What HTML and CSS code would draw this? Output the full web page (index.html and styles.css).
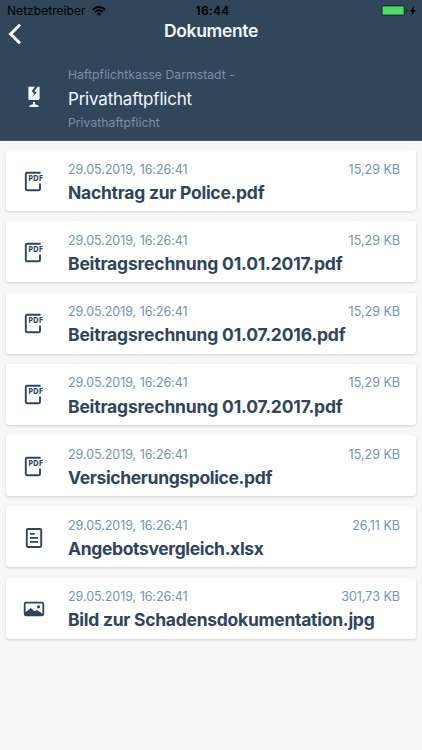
FILE: index.html
```html
<!DOCTYPE html>
<html lang="de">
<head>
<meta charset="utf-8">
<title>Dokumente</title>
<link rel="stylesheet" href="styles.css">
</head>
<body>
<header class="header">
  <div class="status">
    <div class="carrier"><span>Netzbetreiber</span>
      <svg class="wifi" viewBox="0 0 14 10"><g fill="none" stroke="#000" stroke-width="1.9"><path d="M.7 3.7Q7-1.8 13.3 3.7"/><path d="M3 6.1Q7 2.6 11 6.1"/></g><path d="M4.8 7.6Q7 5.8 9.2 7.6L7 9.9Z"/></svg>
    </div>
    <div class="time">16:44</div>
    <div class="power"><svg viewBox="0 0 38 12"><rect x="1.6" y=".6" width="23" height="10" rx="2" fill="none" stroke="#17342f"/><rect x="2.6" y="1.6" width="21" height="8" rx="1" fill="#4cdb63"/><path d="M25.9 4v3.4q1.3-.4 1.3-1.7T25.9 4" fill="#17242f"/><path d="M34.4.8L30 6.4h2.5l-1.1 4L35.8 5h-2.6z"/></svg></div>
  </div>
  <div class="nav">
    <svg class="back" viewBox="0 0 14 22"><path d="M12 1.7L2.6 11 12 20.3" fill="none" stroke="#fff" stroke-width="3"/></svg>
    <h1>Dokumente</h1>
  </div>
  <div class="contract">
    <svg class="glass" viewBox="0 0 24 24"><path fill="#f0f7ff" d="M6.4 1.7H12.8L9.7 6.2L12 8.5L10.4 12L14.6 7.8L12.4 5.9L15.8 1.7H17.6V13.4Q17.6 15 16 15H8Q6.4 15 6.4 13.4ZM11 17h2v2.2l3.5 1.3V22H7.5v-1.5l3.5-1.3z"/></svg>
    <div class="contract-text">
      <div class="insurer">Haftpflichtkasse Darmstadt -</div>
      <div class="product">Privathaftpflicht</div>
      <div class="kind">Privathaftpflicht</div>
    </div>
  </div>
</header>
<main class="list">
  <article class="card"><svg class="icon" viewBox="0 0 24 24"><path class="page" d="M18.6 2.7H5.2Q3.8 2.7 3.8 4.1V18.9Q3.8 20.3 5.2 20.3H16.6Q18 20.3 18 18.9V13.5"/><text x="6.2" y="11.2" class="pdf-label" textLength="14.8" lengthAdjust="spacingAndGlyphs">PDF</text></svg><div class="body"><div class="meta"><span class="date">29.05.2019, 16:26:41</span><span class="size">15,29 KB</span></div><h2>Nachtrag zur Police.pdf</h2></div></article>
  <article class="card"><svg class="icon" viewBox="0 0 24 24"><path class="page" d="M18.6 2.7H5.2Q3.8 2.7 3.8 4.1V18.9Q3.8 20.3 5.2 20.3H16.6Q18 20.3 18 18.9V13.5"/><text x="6.2" y="11.2" class="pdf-label" textLength="14.8" lengthAdjust="spacingAndGlyphs">PDF</text></svg><div class="body"><div class="meta"><span class="date">29.05.2019, 16:26:41</span><span class="size">15,29 KB</span></div><h2 class="dated">Beitragsrechnung 01.01.2017.pdf</h2></div></article>
  <article class="card"><svg class="icon" viewBox="0 0 24 24"><path class="page" d="M18.6 2.7H5.2Q3.8 2.7 3.8 4.1V18.9Q3.8 20.3 5.2 20.3H16.6Q18 20.3 18 18.9V13.5"/><text x="6.2" y="11.2" class="pdf-label" textLength="14.8" lengthAdjust="spacingAndGlyphs">PDF</text></svg><div class="body"><div class="meta"><span class="date">29.05.2019, 16:26:41</span><span class="size">15,29 KB</span></div><h2 class="dated">Beitragsrechnung 01.07.2016.pdf</h2></div></article>
  <article class="card"><svg class="icon" viewBox="0 0 24 24"><path class="page" d="M18.6 2.7H5.2Q3.8 2.7 3.8 4.1V18.9Q3.8 20.3 5.2 20.3H16.6Q18 20.3 18 18.9V13.5"/><text x="6.2" y="11.2" class="pdf-label" textLength="14.8" lengthAdjust="spacingAndGlyphs">PDF</text></svg><div class="body"><div class="meta"><span class="date">29.05.2019, 16:26:41</span><span class="size">15,29 KB</span></div><h2 class="dated">Beitragsrechnung 01.07.2017.pdf</h2></div></article>
  <article class="card"><svg class="icon" viewBox="0 0 24 24"><path class="page" d="M18.6 2.7H5.2Q3.8 2.7 3.8 4.1V18.9Q3.8 20.3 5.2 20.3H16.6Q18 20.3 18 18.9V13.5"/><text x="6.2" y="11.2" class="pdf-label" textLength="14.8" lengthAdjust="spacingAndGlyphs">PDF</text></svg><div class="body"><div class="meta"><span class="date">29.05.2019, 16:26:41</span><span class="size">15,29 KB</span></div><h2 class="tight">Versicherungspolice.pdf</h2></div></article>
  <article class="card"><svg class="icon" viewBox="0 0 24 24"><g fill="none" stroke="currentColor" stroke-width="1.9"><rect x="4.8" y="3" width="14.4" height="18" rx="1.2"/><path d="M8 7.9h4.7M8 11.9h8M8 15.9h8"/></g></svg><div class="body"><div class="meta"><span class="date">29.05.2019, 16:26:41</span><span class="size">26,11 KB</span></div><h2 class="tight">Angebotsvergleich.xlsx</h2></div></article>
  <article class="card"><svg class="icon" viewBox="0 0 24 24"><rect x="2.7" y="5.7" width="18.6" height="12.6" rx="1.2" fill="none" stroke="currentColor" stroke-width="1.8"/><circle cx="16.5" cy="9.8" r="1.6" fill="currentColor"/><path fill="currentColor" d="M3 15.5L8.7 10.9L12.6 14.2L15 12.9L21 17V18.5H3z"/></svg><div class="body"><div class="meta"><span class="date">29.05.2019, 16:26:41</span><span class="size">301,73 KB</span></div><h2>Bild zur Schadensdokumentation.jpg</h2></div></article>
</main>
</body>
</html>
```
FILE: styles.css
```css
* { box-sizing: border-box; }
body {
  margin: 0;
  min-height: 750px;
  background: #f7f7f7;
  color: #30455b;
  font-family: Inter, "Liberation Sans", sans-serif;
}
.header { height: 141px; background: #31465b; border-bottom: 1px solid #4c5762; }
.status {
  display: grid;
  grid-template-columns: 1fr auto 1fr;
  height: 22px;
  padding: 0 4px 0 7px;
  line-height: 22px;
  font-size: 12px;
  color: #000;
}
.carrier { display: flex; align-items: center; gap: 6px; letter-spacing: 0.05px; }
.wifi { width: 14px; height: 10px; }
.time { font-weight: 600; letter-spacing: 0.25px; }
.power { display: flex; justify-content: flex-end; padding-top: 5px; }
.power svg { width: 38px; height: 12px; }
.nav {
  display: grid;
  grid-template-columns: 14px 1fr 14px;
  height: 41px;
  padding: 0 8px;
}
.back { width: 14px; height: 22px; margin-top: 1px; }
h1 {
  margin: 0;
  text-align: center;
  font-size: 17.5px;
  font-weight: 600;
  letter-spacing: -0.35px;
  line-height: 18px;
  color: #f0f7ff;
}
.contract { display: grid; grid-template-columns: 68px 1fr; }
.glass { width: 24px; height: 24px; margin: 22px 0 0 22px; }
.insurer, .kind { font-size: 12.2px; line-height: 24px; letter-spacing: 0.03px; color: #7890aa; }
.product { font-size: 17px; line-height: 24px; letter-spacing: -0.2px; color: #f0f7ff; }
.list { display: grid; gap: 10.25px; padding: 9px 6px; }
.card {
  display: grid;
  grid-template-columns: 62px 1fr;
  height: 61px;
  border-radius: 3px;
  background: #fff;
  box-shadow: 0 1px 3px rgba(0, 0, 0, 0.16);
}
.icon { width: 24px; height: 24px; margin: 19.5px 0 0 16px; color: #30455b; }
.page { fill: none; stroke: currentColor; stroke-width: 1.9px; }
.pdf-label { font: 700 9px "Noto Sans", sans-serif; fill: currentColor; stroke: #fff; stroke-width: 1px; paint-order: stroke; }
.body { padding: 9.7px 16px 0 0; }
.meta { display: flex; justify-content: space-between; font-size: 12.5px; line-height: 20px; color: #7294b6; }
.date { letter-spacing: -0.05px; }
.size { letter-spacing: 0; }
h2 { margin: 1.3px 0 0; font-size: 17.5px; line-height: 24px; font-weight: 650; letter-spacing: -0.27px; white-space: nowrap; }
.dated { letter-spacing: -0.19px; }
.tight { letter-spacing: -0.36px; }
```
